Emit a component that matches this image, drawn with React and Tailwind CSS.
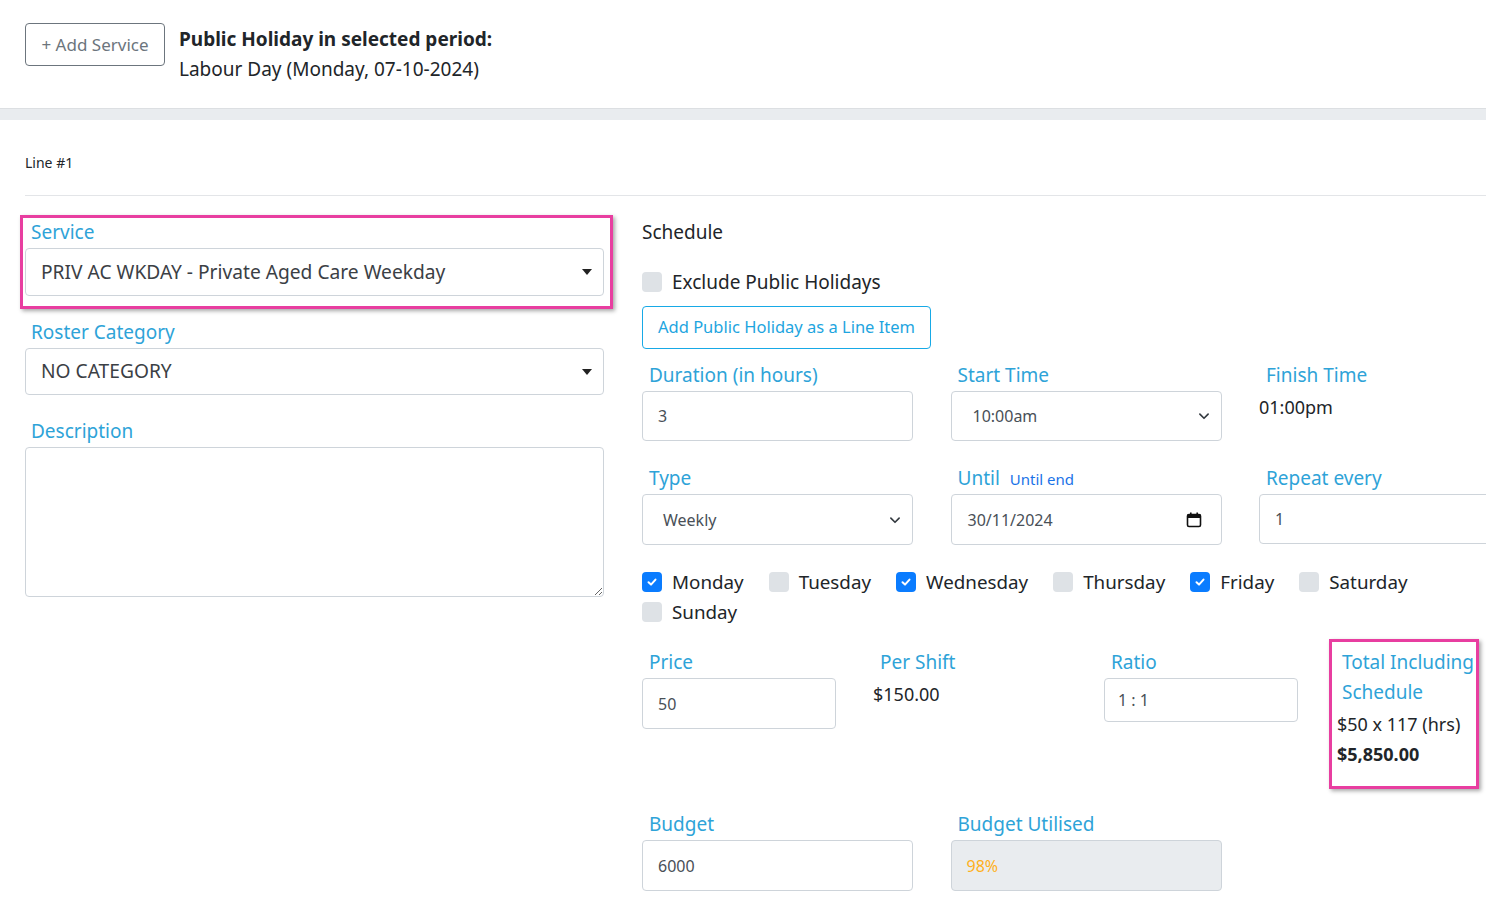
import React from "react";

const FONT = { fontFamily: '"Noto Sans", "Open Sans", sans-serif' };

function Label({ children, className = "" }) {
  return (
    <div className={"h-[24px] leading-[24px] text-[19px] text-[#2ea3d8] pl-[7px] whitespace-nowrap " + className}>
      {children}
    </div>
  );
}

function Box({ children, className = "", h = "h-[50px]", bg = "bg-white" }) {
  return (
    <div className={`${h} ${bg} border border-[#ced4da] rounded-[4px] flex items-center text-[16px] text-[#495057] ${className}`}>
      {children}
    </div>
  );
}

function Chevron() {
  return (
    <svg width="12" height="12" viewBox="0 0 16 16" className="ml-auto mr-[11px]">
      <path d="M2.5 5.5 L8 11 L13.5 5.5" fill="none" stroke="#343a40" strokeWidth="2.2" strokeLinecap="round" strokeLinejoin="round" />
    </svg>
  );
}

function Caret() {
  return (
    <svg width="10" height="6" viewBox="0 0 10 6" className="ml-auto mr-[11px]">
      <path d="M0 0 L10 0 L5 6 Z" fill="#222" />
    </svg>
  );
}

function Check({ checked }) {
  return checked ? (
    <div className="w-[20px] h-[20px] rounded-[4px] bg-[#0a7cff] flex items-center justify-center shrink-0">
      <svg width="12" height="12" viewBox="0 0 12 12">
        <path d="M2.5 6.3 L5 8.6 L9.5 3.6" fill="none" stroke="white" strokeWidth="2" strokeLinecap="round" strokeLinejoin="round" />
      </svg>
    </div>
  ) : (
    <div className="w-[20px] h-[20px] rounded-[4px] bg-[#dee2e6] shrink-0" />
  );
}

function Day({ label, checked }) {
  return (
    <div className="flex items-center gap-[10px] h-[30px] mr-[25px]">
      <Check checked={checked} />
      <span className="text-[18.8px] text-[#212529]">{label}</span>
    </div>
  );
}

export default function App() {
  return (
    <div className="w-[1486px] h-[898px] overflow-hidden bg-white text-[#212529]" style={FONT}>
      {/* header */}
      <div className="h-[108px] flex items-start pl-[25px] pt-[23px] gap-[14px]">
        <div className="h-[43px] w-[140px] border border-[#6c757d] rounded-[4px] flex items-center justify-center text-[17px] text-[#6c757d]">
          + Add Service
        </div>
        <div className="pt-[2px]">
          <div className="text-[19px] font-bold leading-[28px] text-[#212529]">Public Holiday in selected period:</div>
          <div className="text-[19px] leading-[31px] text-[#212529] pt-[1px]">Labour Day (Monday, 07-10-2024)</div>
        </div>
      </div>
      <div className="h-[12px] bg-[#e9ecef] border-t border-[#dcdfe2]" />

      {/* card */}
      <div className="pl-[25px]">
        <div className="h-[76px] border-b border-[#e3e5e8] flex items-start pt-[33px]">
          <span className="text-[14px] leading-[20px] text-[#212529]">Line #1</span>
        </div>

        <div className="flex gap-[38px] pt-[24px]">
          {/* left column */}
          <div className="w-[579px] shrink-0">
            <div className="relative">
              <div className="absolute left-[-5px] top-[-5px] w-[593px] h-[94px] border-[3px] border-[#e83ea0] shadow-[2px_2px_4px_rgba(0,0,0,0.35)] pointer-events-none" />
              <div className="h-[24px] leading-[24px] text-[19px] text-[#2ea3d8] pl-[6px]">Service</div>
              <Box h="h-[48px]" className="mt-[4px] pl-[15px]">
                <span className="text-[19.2px] text-[#3b4045]">PRIV AC WKDAY - Private Aged Care Weekday</span>
                <Caret />
              </Box>
            </div>
            <div className="h-[24px] leading-[24px] text-[19px] text-[#2ea3d8] pl-[6px] mt-[24px]">Roster Category</div>
            <Box h="h-[47px]" className="mt-[4px] pl-[15px]">
              <span className="text-[19.2px] text-[#3b4045]">NO CATEGORY</span>
              <Caret />
            </Box>
            <div className="h-[24px] leading-[24px] text-[19px] text-[#2ea3d8] pl-[6px] mt-[24px]">Description</div>
            <textarea
              readOnly
              className="mt-[4px] block w-full h-[150px] border border-[#ced4da] rounded-[4px] outline-none"
            />
          </div>

          {/* right column */}
          <div className="w-[860px] shrink-0">
            <div className="h-[24px] leading-[24px] text-[19px] text-[#212529]">Schedule</div>
            <div className="mt-[26px] flex items-center gap-[10px] h-[24px]">
              <Check checked={false} />
              <span className="text-[19px]">Exclude Public Holidays</span>
            </div>
            <div className="mt-[12px] h-[43px] w-[289px] border border-[#17a9e6] rounded-[4px] flex items-center justify-center text-[16.5px] text-[#1ea5e0]">
              Add Public Holiday as a Line Item
            </div>

            <div className="grid grid-cols-[271px_271px_271px] gap-x-[37.5px] mt-[14px]">
              <div>
                <Label>Duration (in hours)</Label>
                <Box className="mt-[4px] pl-[15px]">3</Box>
              </div>
              <div>
                <Label>Start Time</Label>
                <Box className="mt-[4px] pl-[21px]">
                  10:00am
                  <Chevron />
                </Box>
              </div>
              <div>
                <Label className="pl-[7px]">Finish Time</Label>
                <div className="mt-[8px] text-[18px] leading-[24px] text-[#212529]">01:00pm</div>
              </div>

              <div className="mt-[25px]">
                <Label>Type</Label>
                <Box className="mt-[4px] pl-[20px] h-[51px]">
                  Weekly
                  <Chevron />
                </Box>
              </div>
              <div className="mt-[25px]">
                <div className="h-[24px] flex items-baseline pl-[7px] whitespace-nowrap">
                  <span className="text-[19px] leading-[24px] text-[#2ea3d8]">Until</span>
                  <span className="ml-[10px] text-[15px] text-[#1a73e8]">Until end</span>
                </div>
                <Box className="mt-[4px] pl-[16px] h-[51px]">
                  30/11/2024
                  <svg width="16" height="16" viewBox="0 0 16 16" className="ml-auto mr-[19px]">
                    <rect x="1.5" y="2.5" width="13" height="12" rx="1.5" fill="none" stroke="#111" strokeWidth="1.6" />
                    <rect x="1.5" y="2.5" width="13" height="3.5" fill="#111" />
                    <rect x="4" y="0.5" width="1.6" height="3" fill="#111" />
                    <rect x="10.4" y="0.5" width="1.6" height="3" fill="#111" />
                  </svg>
                </Box>
              </div>
              <div className="mt-[25px]">
                <Label>Repeat every</Label>
                <Box className="mt-[4px] pl-[15px] w-[260px]">1</Box>
              </div>
            </div>

            <div className="mt-[22px] flex flex-wrap w-[830px]">
              <Day label="Monday" checked />
              <Day label="Tuesday" />
              <Day label="Wednesday" checked />
              <Day label="Thursday" />
              <Day label="Friday" checked />
              <Day label="Saturday" />
              <Day label="Sunday" />
            </div>

            <div className="mt-[23px] h-[162px] grid grid-cols-[194px_194px_194px_150px] gap-x-[37px]">
              <div>
                <Label>Price</Label>
                <Box className="mt-[4px] pl-[15px] h-[51px]">50</Box>
              </div>
              <div>
                <Label>Per Shift</Label>
                <div className="mt-[8px] text-[18px] leading-[24px] text-[#212529]">$150.00</div>
              </div>
              <div>
                <Label>Ratio</Label>
                <Box h="h-[44px]" className="mt-[4px] pl-[13px]">1 : 1</Box>
              </div>
              <div className="relative">
                <div className="absolute left-[-6px] top-[-11px] w-[150px] h-[150px] border-[3px] border-[#e83ea0] shadow-[2px_2px_4px_rgba(0,0,0,0.35)] pointer-events-none" />
                <div className="text-[19px] leading-[30px] text-[#2ea3d8] pl-[7px] -mt-[3px]">
                  Total Including
                  <br />
                  Schedule
                </div>
                <div className="text-[18px] leading-[30px] text-[#212529] mt-[2px] pl-[2px]">$50 x 117 (hrs)</div>
                <div className="text-[18px] leading-[30px] font-bold text-[#212529] pl-[2px]">$5,850.00</div>
              </div>
            </div>

            <div className="grid grid-cols-[271px_271px] gap-x-[37.5px]">
              <div>
                <Label>Budget</Label>
                <Box className="mt-[4px] pl-[15px] h-[51px]">6000</Box>
              </div>
              <div>
                <Label>Budget Utilised</Label>
                <Box bg="bg-[#e9ecef]" className="mt-[4px] pl-[15px] h-[51px] text-[#ffb020]">98%</Box>
              </div>
            </div>
          </div>
        </div>
      </div>
    </div>
  );
}
